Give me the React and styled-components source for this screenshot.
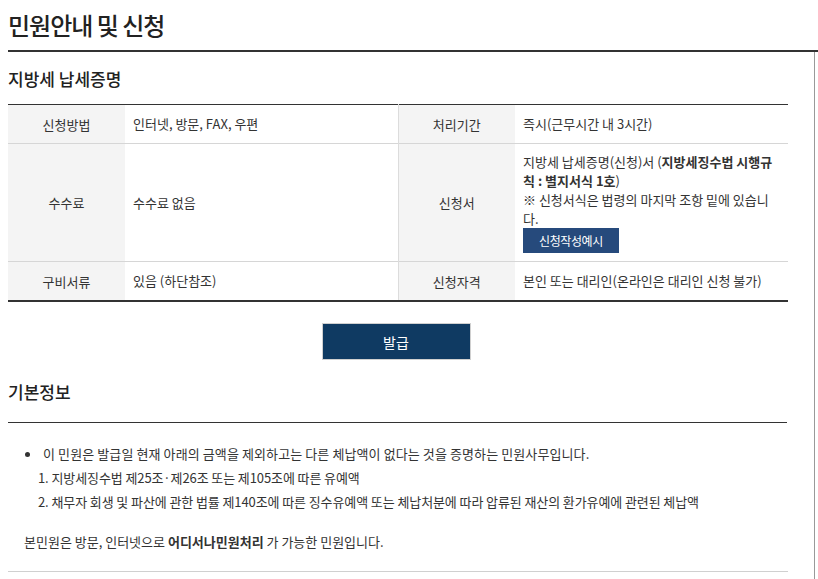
import React from "react";
import styled, { createGlobalStyle } from "styled-components";

const GlobalStyle = createGlobalStyle`
  html, body {
    margin: 0;
    padding: 0;
    background: #ffffff;
  }
  body {
    font-family: "Noto Sans CJK KR", "Noto Sans", sans-serif;
    color: #333333;
    overflow: hidden;
  }
  * {
    box-sizing: border-box;
  }
`;

const Page = styled.div`
  padding-left: 8px;
`;

const PageTitle = styled.h1`
  margin: 0;
  height: 52px;
  padding-top: 8px;
  font-size: 24px;
  font-weight: 500;
  line-height: 34px;
  letter-spacing: -1px;
  color: #222222;
  border-bottom: 2px solid #333333;
`;

const Content = styled.div`
  width: 807px;
  padding-right: 27px;
  border-right: 1px solid #999999;
  min-height: 600px;
`;

const SectionTitle = styled.h2`
  margin: 0;
  height: ${(p) => p.$h}px;
  display: flex;
  align-items: center;
  font-size: 17px;
  font-weight: 500;
  color: #222222;
  border-bottom: ${(p) => (p.$line ? "1px solid #333333" : "none")};
`;

const InfoTable = styled.table`
  width: 780px;
  border-collapse: collapse;
  table-layout: fixed;
  font-size: 13px;
  line-height: 19px;
  border-top: 1px solid #333333;
  border-bottom: 2px solid #333333;

  tr + tr th,
  tr + tr td {
    border-top: 1px solid #d6d6d6;
  }
`;

const HeadCell = styled.th`
  background: #f4f4f4;
  font-weight: 400;
  text-align: center;
  padding: 9px 8px;
  color: #333333;
  border-left: ${(p) => (p.$divider ? "1px solid #dcdcdc" : "none")};
`;

const ValueCell = styled.td`
  padding: ${(p) => (p.$tight ? "8px 8px 8px" : "9px 8px 10px")};
  vertical-align: middle;
  color: #333333;
`;

const SmallButton = styled.button`
  display: block;
  height: 25px;
  padding: 0 16px;
  border: none;
  background: #264a7c;
  color: #ffffff;
  font-family: inherit;
  font-size: 12px;
  line-height: 25px;
  letter-spacing: -0.4px;
`;

const ButtonRow = styled.div`
  display: flex;
  justify-content: center;
  padding: 21px 4px 0 0;
  width: 780px;
`;

const IssueButton = styled.button`
  width: 149px;
  height: 37px;
  background: #0f3a62;
  color: #ffffff;
  border: 1px solid #d0d0d0;
  font-family: inherit;
  font-size: 14px;
`;

const List = styled.ul`
  margin: 19px 0 0 0;
  padding: 0 0 0 17px;
  font-size: 13px;
  line-height: 24px;
  letter-spacing: 0.1px;
`;

const Item = styled.li`
  list-style: none;
  position: relative;
  padding-left: 18px;

  &::before {
    content: "";
    position: absolute;
    left: 0;
    top: 10px;
    width: 5px;
    height: 5px;
    border-radius: 50%;
    background: #333333;
  }
`;

const SubList = styled.ol`
  margin: 0 0 0 -18px;
  padding: 0 0 0 13px;
  list-style: none;
  letter-spacing: -0.1px;
`;

const Note = styled.p`
  margin: 16px 0 0 0;
  padding: 0 0 17px 16px;
  font-size: 13px;
  line-height: 24px;
  border-bottom: 1px solid #d0d0d0;
  width: 780px;

  strong {
    font-weight: 700;
  }
`;

export default function App() {
  return (
    <Page>
      <GlobalStyle />
      <PageTitle>민원안내 및 신청</PageTitle>
      <Content>
        <SectionTitle $h={52}>지방세 납세증명</SectionTitle>
        <InfoTable>
          <colgroup>
            <col style={{ width: 117 }} />
            <col style={{ width: 273 }} />
            <col style={{ width: 117 }} />
            <col style={{ width: 273 }} />
          </colgroup>
          <tbody>
            <tr>
              <HeadCell>신청방법</HeadCell>
              <ValueCell>인터넷, 방문, FAX, 우편</ValueCell>
              <HeadCell $divider>처리기간</HeadCell>
              <ValueCell>즉시(근무시간 내 3시간)</ValueCell>
            </tr>
            <tr>
              <HeadCell>수수료</HeadCell>
              <ValueCell>수수료 없음</ValueCell>
              <HeadCell $divider>신청서</HeadCell>
              <ValueCell $tight>
                지방세 납세증명(신청)서 (<b>지방세징수법 시행규칙 : 별지서식 1호</b>)
                <br />※ 신청서식은 법령의 마지막 조항 밑에 있습니다.
                <SmallButton type="button">신청작성예시</SmallButton>
              </ValueCell>
            </tr>
            <tr>
              <HeadCell>구비서류</HeadCell>
              <ValueCell>있음 (하단참조)</ValueCell>
              <HeadCell $divider>신청자격</HeadCell>
              <ValueCell>본인 또는 대리인(온라인은 대리인 신청 불가)</ValueCell>
            </tr>
          </tbody>
        </InfoTable>
        <ButtonRow>
          <IssueButton type="button">발급</IssueButton>
        </ButtonRow>
        <SectionTitle $h={63} $line>기본정보</SectionTitle>
        <List>
          <Item>
            이 민원은 발급일 현재 아래의 금액을 제외하고는 다른 체납액이 없다는 것을 증명하는 민원사무입니다.
            <SubList>
              <li>1. 지방세징수법 제25조·제26조 또는 제105조에 따른 유예액</li>
              <li>
                2. 채무자 회생 및 파산에 관한 법률 제140조에 따른 징수유예액 또는 체납처분에 따라 압류된 재산의 환가유예에 관련된 체납액
              </li>
            </SubList>
          </Item>
        </List>
        <Note>
          본민원은 방문, 인터넷으로 <strong>어디서나민원처리</strong> 가 가능한 민원입니다.
        </Note>
      </Content>
    </Page>
  );
}
